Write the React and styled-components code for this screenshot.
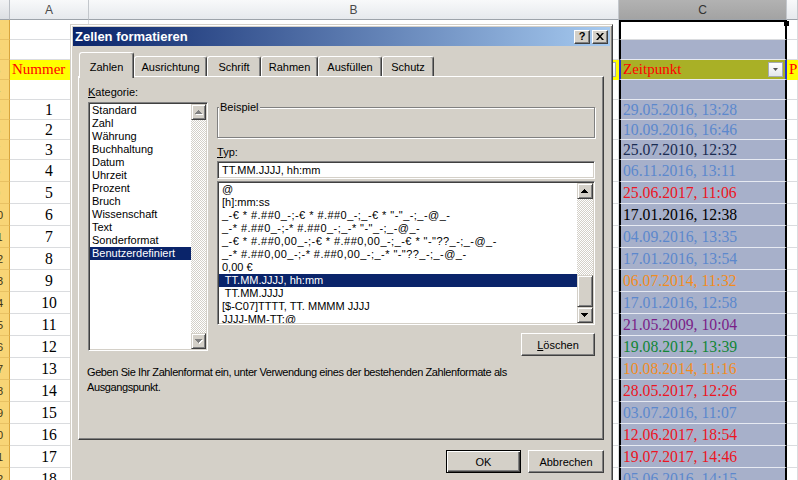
import React from "react";
import styled, { createGlobalStyle, css } from "styled-components";

const GlobalStyle = createGlobalStyle`
  *, *::before, *::after { box-sizing: border-box; }
  html, body { margin: 0; padding: 0; background: #fff; }
  body { width: 798px; height: 480px; overflow: hidden; }
`;

/* ---------- spreadsheet ---------- */

const COLUMNS = "10px 79px 530px 168px 1fr";

const Screen = styled.div`
  position: relative;
  width: 798px;
  height: 480px;
  overflow: hidden;
  background: #fff;
`;

const Sheet = styled.div`
  display: flex;
  flex-direction: column;
`;

const SheetRow = styled.div`
  flex: none;
  display: grid;
  grid-template-columns: ${COLUMNS};
  height: ${(p) => p.$h}px;
`;

const Corner = styled.div`
  background: linear-gradient(#f1f2f4, #dcdfe3);
  border-right: 1px solid #b9bdc3;
  border-bottom: 1px solid #9da3aa;
`;

const ColHead = styled.div`
  display: flex;
  align-items: center;
  justify-content: center;
  font: 12px "Liberation Sans", Arial, sans-serif;
  color: ${(p) => (p.$selected ? "#333" : "#4a4a4a")};
  background: ${(p) =>
    p.$selected
      ? "linear-gradient(#b2b2b2, #a3a3a3)"
      : "linear-gradient(#f8f9fa, #e6e9ed)"};
  border-right: 1px solid #c3c7cc;
  border-bottom: 1px solid #9da3aa;
`;

const RowHead = styled.div`
  display: flex;
  align-items: center;
  overflow: hidden;
  background: #f8d576;
  border-right: 1px solid #d9a53c;
  border-bottom: 1px solid #e8c163;
`;

/* the header column is scrolled almost out of view: only the tail of
   two-digit numbers peeks in at the left edge */
const RowNum = styled.span`
  flex: none;
  width: 30px;
  margin-left: -18px;
  text-align: center;
  font: 11px "Liberation Sans", Arial, sans-serif;
  color: #3d3214;
`;

const Cell = styled.div`
  position: relative;
  display: flex;
  align-items: center;
  justify-content: ${(p) => p.$align || "flex-start"};
  padding: 0 2px;
  overflow: hidden;
  white-space: nowrap;
  font: ${(p) => p.$size || 15.7}px "Liberation Serif", "Times New Roman", serif;
  color: ${(p) => p.$color || "#000"};
  background: ${(p) => p.$bg || "#fff"};
  border-right: 1px solid ${(p) => p.$bg || "#dadcdf"};
  border-bottom: 1px solid ${(p) => p.$bg || "#dadcdf"};
`;

const SelCell = styled(Cell)`
  overflow: visible;
  border-left: 2px solid ${(p) => p.$edge || "#000"};
  border-right: 2px solid ${(p) => p.$edge || "#000"};
  border-bottom: 1px solid ${(p) => p.$line || "#e7eaf2"};
  border-top: ${(p) => (p.$top ? "2px solid #000" : "none")};
`;

const FillHandle = styled.span`
  position: absolute;
  top: -1px;
  right: -4px;
  width: 5px;
  height: 5px;
  background: #000;
  z-index: 2;
`;

const FilterButton = styled.span`
  position: absolute;
  right: 2px;
  top: 2px;
  width: 15px;
  height: 15px;
  display: flex;
  align-items: center;
  justify-content: center;
  background: linear-gradient(#ffffff, #e4e7eb);
  border: 1px solid #a5abb3;
`;

const FilterArrow = () => (
  <svg width="5" height="3" viewBox="0 0 5 3">
    <path d="M0 0h5L2.5 3z" fill="#555" />
  </svg>
);

const TONES = {
  light: "#5c88cd",
  navy: "#1a2c52",
  red: "#ec1523",
  black: "#000",
  orange: "#f28c1f",
  purple: "#7a1e87",
  green: "#128636",
};

const DATES = [
  ["29.05.2016, 13:28", "light"],
  ["10.09.2016, 16:46", "light"],
  ["25.07.2010, 12:32", "navy"],
  ["06.11.2016, 13:11", "light"],
  ["25.06.2017, 11:06", "red"],
  ["17.01.2016, 12:38", "black"],
  ["04.09.2016, 13:35", "light"],
  ["17.01.2016, 13:54", "light"],
  ["06.07.2014, 11:32", "orange"],
  ["17.01.2016, 12:58", "light"],
  ["21.05.2009, 10:04", "purple"],
  ["19.08.2012, 13:39", "green"],
  ["10.08.2014, 11:16", "orange"],
  ["28.05.2017, 12:26", "red"],
  ["03.07.2016, 11:07", "light"],
  ["12.06.2017, 18:54", "red"],
  ["19.07.2017, 14:46", "red"],
  ["05.06.2016, 14:15", "light"],
];

const ROWS = [
  { n: 1, h: 20, kind: "top" },
  { n: 2, h: 20, kind: "blank" },
  { n: 3, h: 20, kind: "head" },
  { n: 4, h: 20, kind: "blank" },
  ...DATES.map(([date, tone], i) => ({
    n: i + 5,
    h: i < 3 ? 20 : 22,
    kind: "data",
    num: i + 1,
    date,
    tone,
  })),
];

const COL_BG = "#a7b0ca";

function SheetBody() {
  return (
    <Sheet>
      <SheetRow $h={20}>
        <Corner />
        <ColHead>A</ColHead>
        <ColHead>B</ColHead>
        <ColHead $selected>C</ColHead>
        <ColHead />
      </SheetRow>
      {ROWS.map((r) => (
        <SheetRow key={r.n} $h={r.h}>
          <RowHead>
            <RowNum>{r.n}</RowNum>
          </RowHead>
          {r.kind === "head" ? (
            <>
              <Cell $bg="#ffff00" $color="#ff0000" $size={15}>
                Nummer
                <FilterButton>
                  <FilterArrow />
                </FilterButton>
              </Cell>
              <Cell $bg="#ffff00">
                <FilterButton>
                  <FilterArrow />
                </FilterButton>
              </Cell>
              <SelCell $bg="#a9b026" $color="#ff0000" $edge="#2330d0" $size={15}>
                Zeitpunkt
                <FilterButton>
                  <FilterArrow />
                </FilterButton>
              </SelCell>
              <Cell $bg="#ffff00" $color="#ff0000" $size={15}>
                P
              </Cell>
            </>
          ) : (
            <>
              <Cell $align="center">{r.num}</Cell>
              <Cell />
              <SelCell
                $bg={r.kind === "top" ? "#fff" : COL_BG}
                $line={r.kind === "top" ? "#dadcdf" : undefined}
                $top={r.kind === "top"}
                $color={TONES[r.tone]}
              >
                {r.date}
                {r.kind === "top" && <FillHandle />}
              </SelCell>
              <Cell />
            </>
          )}
        </SheetRow>
      ))}
    </Sheet>
  );
}

/* ---------- dialog ---------- */

const Window = styled.div`
  position: absolute;
  left: 70px;
  top: 24px;
  width: 543px;
  height: 470px;
  padding: 2px;
  background: #d4d0c8;
  border: 1px solid;
  border-color: #d4d0c8 #404040 #404040 #d4d0c8;
  box-shadow: inset 1px 1px 0 #fff, inset -1px -1px 0 #808080;
  font: 11px "Liberation Sans", Arial, sans-serif;
  color: #000;
`;

const TitleBar = styled.div`
  height: 19px;
  display: flex;
  align-items: center;
  justify-content: space-between;
  padding: 0 2px;
  background: linear-gradient(90deg, #0a246a, #a6caf0);
`;

const Title = styled.span`
  font: bold 13px "Liberation Sans", Arial, sans-serif;
  color: #fff;
`;

const CaptionButtons = styled.div`
  display: flex;
  gap: 2px;
`;

const bevel = css`
  background: #d4d0c8;
  border: 1px solid;
  border-color: #fff #404040 #404040 #fff;
  box-shadow: inset -1px -1px 0 #808080;
`;

const CaptionButton = styled.span`
  width: 16px;
  height: 14px;
  display: flex;
  align-items: center;
  justify-content: center;
  font: bold 11px/1 "Liberation Sans", Arial, sans-serif;
  ${bevel}
`;

const Body = styled.div`
  padding: 6px 6px 0 5px;
`;

const Tabs = styled.div`
  position: relative;
  z-index: 1;
  display: flex;
  align-items: flex-end;
  height: 26px;
  margin-bottom: -2px;
  padding-left: 1px;
`;

const Tab = styled.div`
  flex: none;
  width: ${(p) => p.$w}px;
  height: ${(p) => (p.$active ? 26 : 20)}px;
  margin-bottom: ${(p) => (p.$active ? 0 : 2)}px;
  padding-top: ${(p) => (p.$active ? 8 : 4)}px;
  line-height: 13px;
  text-align: center;
  background: #d4d0c8;
  border: 1px solid;
  border-bottom: 0;
  border-color: #fff #404040 transparent #fff;
  border-radius: 3px 3px 0 0;
  box-shadow: inset -1px 0 0 #808080;
`;

const Panel = styled.div`
  height: 364px;
  padding: 9px 8px 0 9px;
  border: 1px solid;
  border-color: #fff #404040 #404040 #fff;
  box-shadow: inset -1px -1px 0 #808080;
`;

const TopRow = styled.div`
  display: flex;
  gap: 9px;
`;

const LeftCol = styled.div`
  flex: none;
  width: 120px;
`;

const RightCol = styled.div`
  flex: 1;
  display: flex;
  flex-direction: column;
`;

const Label = styled.div`
  height: 13px;
  line-height: 13px;
  margin-top: ${(p) => p.$mt || 0}px;
`;

const sunken = css`
  background: #fff;
  border: 1px solid;
  border-color: #808080 #fff #fff #808080;
  box-shadow: inset 1px 1px 0 #404040, inset -1px -1px 0 #d4d0c8;
`;

const ListBox = styled.div`
  display: flex;
  height: ${(p) => p.$h}px;
  margin-top: ${(p) => p.$mt}px;
  padding: 1px;
  ${sunken}
`;

const Items = styled.div`
  flex: 1;
  min-width: 0;
  overflow: hidden;
`;

const Item = styled.div`
  height: 13px;
  line-height: ${(p) => p.$lh || 13}px;
  padding-left: ${(p) => p.$inset}px;
  white-space: pre;
  letter-spacing: ${(p) => (p.$wide ? "0.45px" : "normal")};
  background: ${(p) => (p.$selected ? "#0a246a" : "transparent")};
  color: ${(p) => (p.$selected ? "#fff" : "#000")};
`;

const Scrollbar = styled.div`
  flex: none;
  width: ${(p) => p.$w || 16}px;
  display: flex;
  flex-direction: column;
`;

const ScrollButton = styled.div`
  flex: none;
  height: 16px;
  display: flex;
  align-items: center;
  justify-content: center;
  background: #d4d0c8;
  border: 1px solid;
  border-color: #d4d0c8 #404040 #404040 #d4d0c8;
  box-shadow: inset 1px 1px 0 #fff, inset -1px -1px 0 #808080;
`;

const Track = styled.div`
  flex: 1;
  display: flex;
  flex-direction: column;
  justify-content: flex-end;
  background: repeating-conic-gradient(#d4d0c8 0 25%, #fff 0 50%) 0 0 / 2px 2px;
`;

const Thumb = styled(ScrollButton)`
  height: 32px;
`;

const UP = "M3 0h1v1h1v1h1v1h1v1H0V3h1V2h1V1h1z";
const DOWN = "M0 0h7v1H6v1H5v1H4v1H3V3H2V2H1V1H0z";

function Arrow({ down, disabled }) {
  const d = down ? DOWN : UP;
  return (
    <svg width="8" height="5" viewBox="0 0 8 5" shapeRendering="crispEdges">
      {disabled && <path d={d} fill="#fff" transform="translate(1 1)" />}
      <path d={d} fill={disabled ? "#808080" : "#000"} />
    </svg>
  );
}

const TextField = styled.div`
  height: 18px;
  margin-top: 2px;
  padding: 0 4px;
  display: flex;
  align-items: center;
  ${sunken}
`;

const GroupBox = styled.div`
  position: relative;
  height: 31px;
  margin-top: 21px;
  border: 1px solid #808080;
  box-shadow: inset 1px 1px 0 #fff, 1px 1px 0 #fff;
`;

const GroupLegend = styled.span`
  position: absolute;
  top: -7px;
  left: 1px;
  padding: 0 1px;
  line-height: 13px;
  background: #d4d0c8;
`;

const PushButton = styled.button`
  flex: none;
  width: ${(p) => p.$w}px;
  height: 23px;
  padding: 0;
  font: inherit;
  color: #000;
  ${(p) =>
    p.$default
      ? css`
          background: #d4d0c8;
          border: 1px solid #000;
          box-shadow: inset 1px 1px 0 #fff, inset -1px -1px 0 #404040,
            inset -2px -2px 0 #808080;
        `
      : bevel}
`;

const SideButton = styled(PushButton)`
  align-self: flex-end;
  margin-top: 8px;
`;

const Hint = styled.p`
  margin: 9px 0 0 -1px;
  line-height: 15px;
  letter-spacing: -0.4px;
`;

const ButtonRow = styled.div`
  display: flex;
  justify-content: flex-end;
  gap: 7px;
  margin-top: 10px;
`;

const TABS = [
  ["Zahlen", 55],
  ["Ausrichtung", 73],
  ["Schrift", 54],
  ["Rahmen", 57],
  ["Ausfüllen", 64],
  ["Schutz", 52],
];

const CATEGORIES = [
  "Standard",
  "Zahl",
  "Währung",
  "Buchhaltung",
  "Datum",
  "Uhrzeit",
  "Prozent",
  "Bruch",
  "Wissenschaft",
  "Text",
  "Sonderformat",
  "Benutzerdefiniert",
];

const FORMATS = [
  "@",
  "[h]:mm:ss",
  '_-€ * #.##0_-;-€ * #.##0_-;_-€ * "-"_-;_-@_-',
  '_-* #.##0_-;-* #.##0_-;_-* "-"_-;_-@_-',
  '_-€ * #.##0,00_-;-€ * #.##0,00_-;_-€ * "-"??_-;_-@_-',
  '_-* #.##0,00_-;-* #.##0,00_-;_-* "-"??_-;_-@_-',
  "0,00 €",
  " TT.MM.JJJJ, hh:mm",
  " TT.MM.JJJJ",
  "[$-C07]TTTT, TT. MMMM JJJJ",
  "JJJJ-MM-TT;@",
];

function FormatDialog() {
  return (
    <Window>
      <TitleBar>
        <Title>Zellen formatieren</Title>
        <CaptionButtons>
          <CaptionButton>?</CaptionButton>
          <CaptionButton>
            <svg width="8" height="7" viewBox="0 0 8 7">
              <path
                d="M0 0h2l2 2.4L6 0h2L5 3.5 8 7H6L4 4.6 2 7H0l3-3.5z"
                fill="#000"
              />
            </svg>
          </CaptionButton>
        </CaptionButtons>
      </TitleBar>

      <Body>
        <Tabs>
          {TABS.map(([name, w], i) => (
            <Tab key={name} $w={w} $active={i === 0}>
              {name}
            </Tab>
          ))}
        </Tabs>

        <Panel>
          <TopRow>
            <LeftCol>
              <Label>
                <u>K</u>ategorie:
              </Label>
              <ListBox $h={249} $mt={3}>
                <Items>
                  {CATEGORIES.map((c, i) => (
                    <Item key={c} $inset={2} $selected={i === CATEGORIES.length - 1}>
                      {c}
                    </Item>
                  ))}
                </Items>
                <Scrollbar $w={15}>
                  <ScrollButton>
                    <Arrow disabled />
                  </ScrollButton>
                  <Track />
                  <ScrollButton>
                    <Arrow down disabled />
                  </ScrollButton>
                </Scrollbar>
              </ListBox>
            </LeftCol>

            <RightCol>
              <GroupBox>
                <GroupLegend>Beispiel</GroupLegend>
              </GroupBox>
              <Label $mt={8}>
                <u>T</u>yp:
              </Label>
              <TextField>TT.MM.JJJJ, hh:mm</TextField>
              <ListBox $h={144} $mt={2}>
                <Items>
                  {FORMATS.map((f, i) => (
                    <Item
                      key={f}
                      $inset={3}
                      $lh={12}
                      $wide={f.includes("#")}
                      $selected={i === 7}
                    >
                      {f}
                    </Item>
                  ))}
                </Items>
                <Scrollbar>
                  <ScrollButton>
                    <Arrow />
                  </ScrollButton>
                  <Track>
                    <Thumb />
                  </Track>
                  <ScrollButton>
                    <Arrow down />
                  </ScrollButton>
                </Scrollbar>
              </ListBox>
              <SideButton $w={74}>
                <u>L</u>öschen
              </SideButton>
            </RightCol>
          </TopRow>

          <Hint>
            Geben Sie Ihr Zahlenformat ein, unter Verwendung eines der bestehenden
            Zahlenformate als
            <br />
            Ausgangspunkt.
          </Hint>
        </Panel>

        <ButtonRow>
          <PushButton $w={75} $default>
            OK
          </PushButton>
          <PushButton $w={76}>Abbrechen</PushButton>
        </ButtonRow>
      </Body>
    </Window>
  );
}

export default function App() {
  return (
    <Screen>
      <GlobalStyle />
      <SheetBody />
      <FormatDialog />
    </Screen>
  );
}
